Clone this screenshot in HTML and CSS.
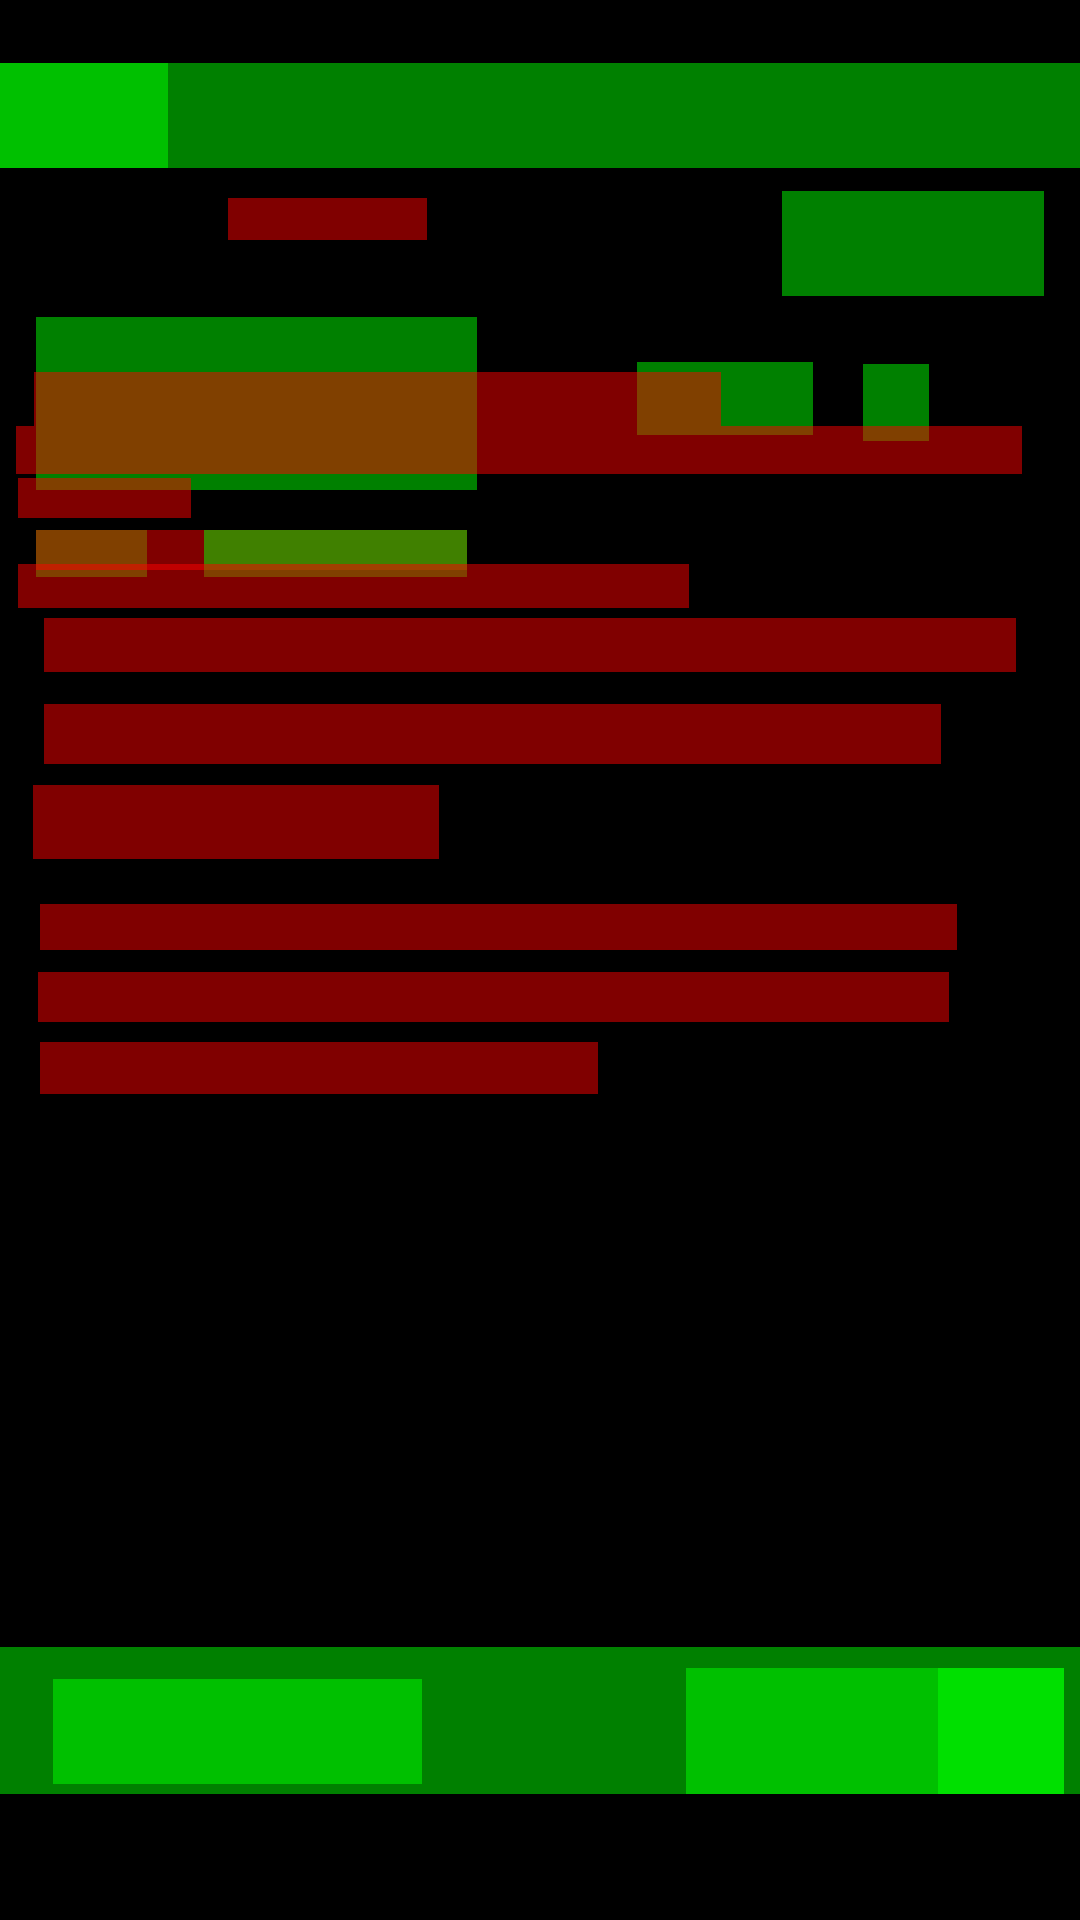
FILE: index.html
```html
<!DOCTYPE html>
<html lang="en">
<head>
    <meta charset="UTF-8">
    <title>Layout</title>
    <link rel="stylesheet" href="styles.css">
</head>
<body>
    <header class="topbar">
        <div class="logo"></div>
    </header>

    <section class="title-row">
        <div class="text title"></div>
        <div class="box avatar"></div>
    </section>

    <section class="hero">
        <div class="box cover"></div>
        <div class="box chip chip-a"></div>
        <div class="box chip chip-b"></div>
        <div class="text over headline"></div>
        <div class="text over subline"></div>
        <div class="text over byline"></div>
        <div class="box over tag"></div>
        <div class="text over meta"></div>
        <div class="box over badge"></div>
        <div class="text over summary"></div>
    </section>

    <section class="list">
        <div class="text item item-1"></div>
        <div class="text item item-2"></div>
        <div class="text item item-3"></div>
        <div class="text item item-4"></div>
        <div class="text item item-5"></div>
        <div class="text item item-6"></div>
    </section>

    <footer class="bottombar">
        <div class="box nav-left"></div>
        <div class="box nav-right">
            <div class="box nav-active"></div>
        </div>
    </footer>
</body>
</html>
```

FILE: styles.css
```css
body {
    margin: 0;
    width: 1080px;
    height: 1920px;
    background: #000;
    font-family: "Liberation Sans", Arial, sans-serif;
    overflow: hidden;
}

.box {
    background: rgba(0, 255, 0, 0.5);
}

.text {
    background: rgba(255, 0, 0, 0.5);
}

/* top bar */
.topbar {
    margin-top: 63px;
    height: 105px;
    background: rgba(0, 255, 0, 0.5);
    display: flex;
}

.logo {
    width: 168px;
    height: 105px;
    background: rgba(0, 255, 0, 0.5);
}

/* title row */
.title-row {
    display: flex;
    align-items: flex-start;
    height: 149px;
}

.title {
    margin: 30px 0 0 228px;
    width: 199px;
    height: 42px;
}

.avatar {
    margin: 23px 0 0 355px;
    width: 262px;
    height: 105px;
}

/* hero card, overlapping layers */
.hero {
    position: relative;
    height: 291px;
}

.cover {
    margin-left: 36px;
    width: 441px;
    height: 173px;
}

.over,
.chip {
    position: absolute;
}

.chip-a { left: 637px; top: 45px; width: 176px; height: 73px; }
.chip-b { left: 863px; top: 47px; width: 66px; height: 77px; }
.headline { left: 34px; top: 55px; width: 687px; height: 54px; }
.subline { left: 16px; top: 109px; width: 1006px; height: 48px; }
.byline { left: 18px; top: 161px; width: 173px; height: 40px; }
.tag { left: 36px; top: 213px; width: 111px; height: 47px; }
.meta { left: 36px; top: 213px; width: 431px; height: 40px; }
.badge { left: 204px; top: 213px; width: 263px; height: 47px; }
.summary { left: 18px; top: 247px; width: 671px; height: 44px; }

/* list */
.list {
    display: flex;
    flex-direction: column;
    align-items: flex-start;
}

.item-1 { margin: 10px 0 0 44px; width: 972px; height: 54px; }
.item-2 { margin: 32px 0 0 44px; width: 897px; height: 60px; }
.item-3 { margin: 21px 0 0 33px; width: 406px; height: 74px; }
.item-4 { margin: 45px 0 0 40px; width: 917px; height: 46px; }
.item-5 { margin: 22px 0 0 38px; width: 911px; height: 50px; }
.item-6 { margin: 20px 0 0 40px; width: 558px; height: 52px; }

/* bottom bar */
.bottombar {
    margin-top: 553px;
    height: 147px;
    background: rgba(0, 255, 0, 0.5);
    display: flex;
    align-items: flex-start;
}

.nav-left {
    margin: 32px 0 0 53px;
    width: 369px;
    height: 105px;
}

.nav-right {
    margin: 21px 0 0 264px;
    width: 378px;
    height: 126px;
    display: flex;
    justify-content: flex-end;
}

.nav-active {
    width: 126px;
    height: 126px;
}
```
